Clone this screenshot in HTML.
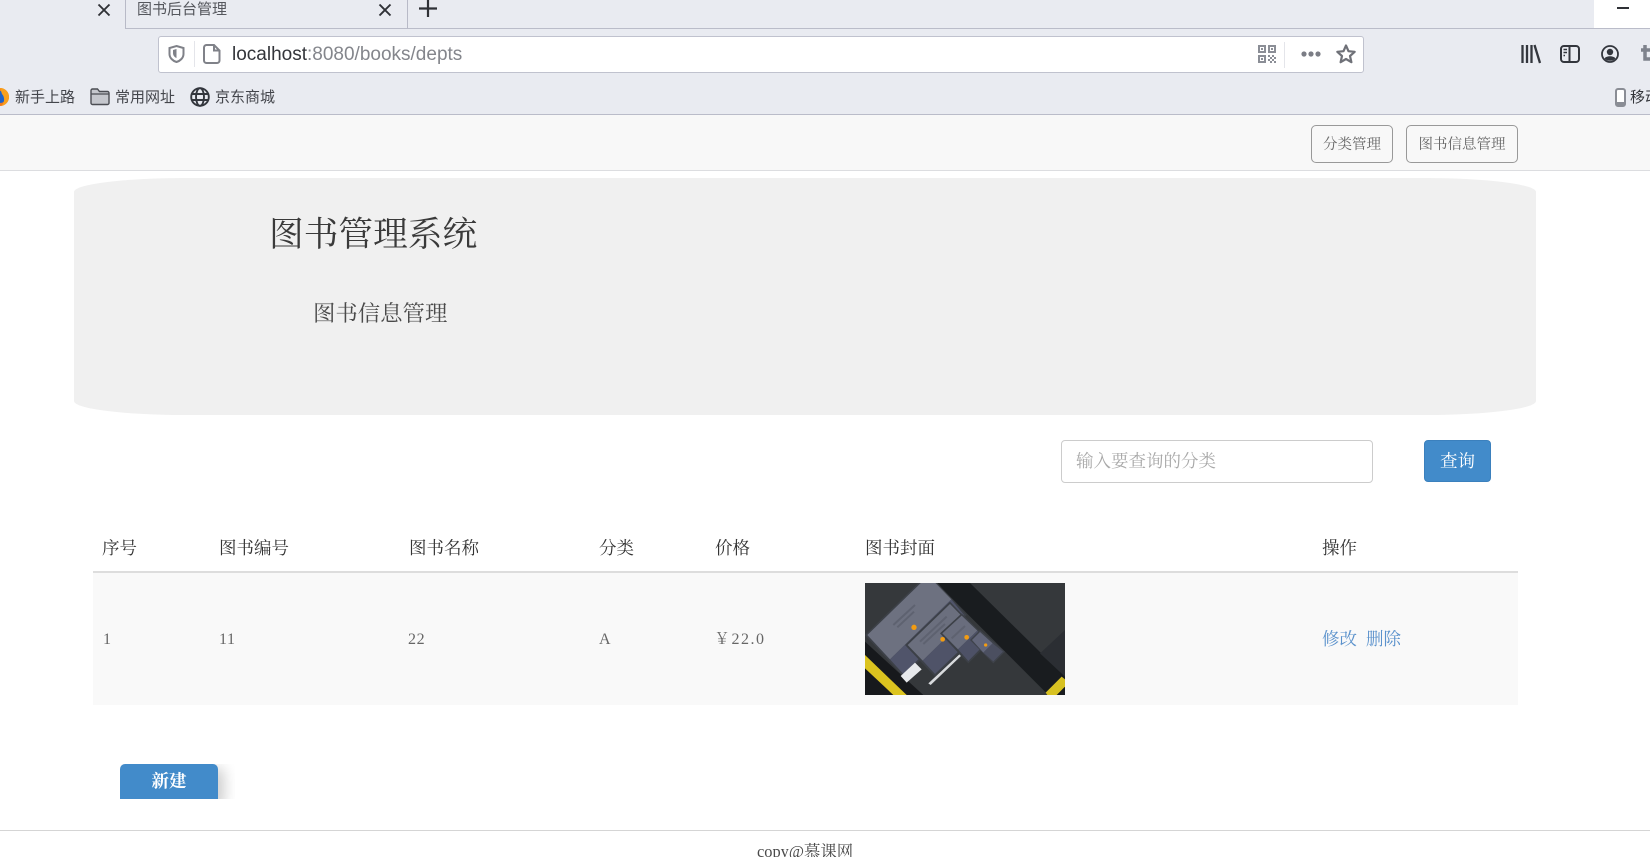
<!DOCTYPE html>
<html lang="zh"><head><meta charset="utf-8"><title>图书后台管理</title>
<style>
*{box-sizing:border-box}
html,body{margin:0;padding:0;width:1650px;height:857px;overflow:hidden;background:#fff}
body{position:relative;font-family:"Liberation Serif","Noto Serif CJK SC",serif;color:#333}
.a{position:absolute;white-space:nowrap}
.ui{font-family:"Liberation Sans","Noto Sans CJK SC",sans-serif}
.bm{font-size:15px;line-height:20px;top:88px;color:#44464c}
.th{font-size:17.500px;line-height:24px;top:536px;color:#333}
.td{font-size:16px;line-height:22px;top:629px;color:#666;letter-spacing:.6px}
svg{position:absolute;overflow:visible}
</style></head><body>
<!-- browser chrome -->
<div class="a" style="left:0;top:0;width:1650px;height:114px;background:#e9ebf1"></div>
<div class="a" style="left:0;top:28px;width:1650px;height:1px;background:#babcc9"></div>
<div class="a" style="left:0;top:0;width:125px;height:29px;background:#e9ebf1"></div>
<div class="a" style="left:125px;top:0;width:1px;height:29px;background:#b8bac7"></div>
<div class="a" style="left:407px;top:0;width:1px;height:29px;background:#b8bac7"></div>
<div class="a" style="left:1594px;top:0;width:56px;height:28px;background:#fff"></div>
<div class="a" style="left:1617px;top:7px;width:12px;height:2px;background:#2f3136"></div>
<svg style="left:97px;top:3px" width="14" height="14" viewBox="0 0 14 14"><path d="M1.500 1.500L12.500 12.500M12.500 1.500L1.500 12.500" stroke="#2f3136" stroke-width="1.900"/></svg>
<svg style="left:378px;top:3px" width="14" height="14" viewBox="0 0 14 14"><path d="M1.500 1.500L12.500 12.500M12.500 1.500L1.500 12.500" stroke="#2f3136" stroke-width="1.900"/></svg>
<svg style="left:419px;top:0" width="18" height="18" viewBox="0 0 18 18"><path d="M9 0V17M0 8.500H18" stroke="#2f3136" stroke-width="2.200"/></svg>
<div class="a ui" style="left:137px;top:0;font-size:15px;line-height:20px;color:#55575d">图书后台管理</div>
<!-- url bar -->
<div class="a" style="left:158px;top:36px;width:1206px;height:37px;background:#fff;border:1px solid #c0c2ce;border-radius:3px"></div>
<div class="a" style="left:194px;top:41px;width:1px;height:26px;background:#e4e5ea"></div>
<svg style="left:168px;top:45px" width="17" height="18" viewBox="0 0 17 18"><path d="M8.500 1L15.500 3V9C15.500 13 12 16 8.500 17C5 16 1.500 13 1.500 9V3Z" fill="none" stroke="#7f8188" stroke-width="2"/><path d="M8.500 4V13C6 12 5 10 5 8V5Z" fill="#7f8188"/></svg>
<svg style="left:203px;top:44px" width="18" height="20" viewBox="0 0 18 20"><path d="M3.500 1H11L16.500 6.500V16.500A2.500 2.500 0 0 1 14 19H3.500A2.500 2.500 0 0 1 1 16.500V3.500A2.500 2.500 0 0 1 3.500 1ZM11 1V6.500H16.500" fill="none" stroke="#808289" stroke-width="2"/></svg>
<div class="a ui" style="left:232px;top:43px;font-size:19px;line-height:24px;color:#33353a">localhost<span style="color:#84868c">:8080/books/depts</span></div>
<svg style="left:1258px;top:45px" width="18" height="18" viewBox="0 0 18 18"><g fill="#8b8e96"><path d="M0 0H8V8H0ZM2 2V6H6V2Z" fill-rule="evenodd"/><path d="M10 0H18V8H10ZM12 2V6H16V2Z" fill-rule="evenodd"/><path d="M0 10H8V18H0ZM2 12V16H6V12Z" fill-rule="evenodd"/><rect x="3" y="3" width="2" height="2"/><rect x="13" y="3" width="2" height="2"/><rect x="3" y="13" width="2" height="2"/><rect x="10" y="10" width="2" height="2"/><rect x="14" y="10" width="2" height="2"/><rect x="12" y="12" width="2" height="2"/><rect x="16" y="12" width="2" height="2"/><rect x="10" y="14" width="2" height="2"/><rect x="14" y="14" width="2" height="2"/><rect x="12" y="16" width="2" height="2"/><rect x="16" y="16" width="2" height="2"/></g></svg>
<div class="a" style="left:1284px;top:42px;width:1px;height:26px;background:#e4e5ea"></div>
<svg style="left:1301px;top:51px" width="20" height="6" viewBox="0 0 20 6"><g fill="#7b7d85"><circle cx="3" cy="3" r="2.600"/><circle cx="10" cy="3" r="2.600"/><circle cx="17" cy="3" r="2.600"/></g></svg>
<svg style="left:1336px;top:44px" width="20" height="20" viewBox="0 0 20 20"><path d="M10 1.500L12.500 7.200L18.700 7.800L14 12L15.400 18.200L10 15L4.600 18.200L6 12L1.300 7.800L7.500 7.200Z" fill="none" stroke="#6f7178" stroke-width="2.200" stroke-linejoin="round"/></svg>
<!-- toolbar icons -->
<svg style="left:1521px;top:45px" width="20" height="18" viewBox="0 0 20 18"><path d="M1.500 0V18M6 0V18M10.500 0V18M13.500 0L19 18" stroke="#33363d" stroke-width="2.300" fill="none"/></svg>
<svg style="left:1560px;top:45px" width="20" height="18" viewBox="0 0 20 18"><rect x="1" y="1" width="18" height="16" rx="3" fill="none" stroke="#33363d" stroke-width="2"/><path d="M9.500 1V17" stroke="#33363d" stroke-width="2"/><path d="M3.500 4.500H7M3.500 7.500H7M3.500 10.500H5" stroke="#33363d" stroke-width="1.500"/></svg>
<svg style="left:1601px;top:45px" width="18" height="18" viewBox="0 0 18 18"><circle cx="9" cy="9" r="8" fill="none" stroke="#33363d" stroke-width="1.800"/><circle cx="9" cy="7" r="3.200" fill="#33363d"/><path d="M3.500 13.500C5 10.500 13 10.500 14.500 13.500C12 16.500 6 16.500 3.500 13.500Z" fill="#33363d"/></svg>
<svg style="left:1641px;top:45px" width="12" height="18" viewBox="0 0 12 18"><path d="M4 0V14H12M0 5H12" fill="none" stroke="#7e828c" stroke-width="3.500"/></svg>
<!-- bookmarks -->
<svg style="left:-10px;top:87px" width="20" height="20" viewBox="0 0 20 20"><circle cx="10" cy="10" r="9" fill="#f27a1a"/><circle cx="10" cy="10" r="6" fill="#1f63c9"/><path d="M10 1A9 9 0 0 1 19 10C19 14 16 18 11 19C15 16 15 10 12 7Z" fill="#f9a01c"/></svg>
<div class="a ui bm" style="left:15px">新手上路</div>
<svg style="left:90px;top:88px" width="20" height="18" viewBox="0 0 20 18"><path d="M1 15V2.500A1.500 1.500 0 0 1 2.500 1H7.500L9.500 3.500H17.500A1.500 1.500 0 0 1 19 5V15A1.500 1.500 0 0 1 17.500 16.500H2.500A1.500 1.500 0 0 1 1 15Z" fill="#c5c7cd" stroke="#4b4d53" stroke-width="1.400"/><path d="M1 6H19" stroke="#4b4d53" stroke-width="1.200"/></svg>
<div class="a ui bm" style="left:115px">常用网址</div>
<svg style="left:190px;top:87px" width="20" height="20" viewBox="0 0 20 20"><g fill="none" stroke="#33363d" stroke-width="1.900"><circle cx="10" cy="10" r="8.800"/><ellipse cx="10" cy="10" rx="4" ry="8.800"/><path d="M1.500 7H18.500M1.500 13H18.500"/></g></svg>
<div class="a ui bm" style="left:215px">京东商城</div>
<svg style="left:1615px;top:88px" width="11" height="19" viewBox="0 0 11 19"><rect x="1" y="1" width="9" height="17" rx="2" fill="#fff" stroke="#8a8d95" stroke-width="2"/><rect x="1" y="14" width="9" height="4" fill="#8a8d95"/></svg>
<div class="a ui bm" style="left:1630px;color:#33353a">移动</div>
<div class="a" style="left:0;top:114px;width:1650px;height:1px;background:#babcc9"></div>
<!-- navbar -->
<div class="a" style="left:0;top:115px;width:1650px;height:56px;background:#f8f8f8;border-bottom:1px solid #dcdde0"></div>
<div class="a" style="left:1311px;top:125px;width:82px;height:38px;border:1px solid #999;border-radius:5px;font-size:14.500px;line-height:38px;text-align:center;color:#666">分类管理</div>
<div class="a" style="left:1406px;top:125px;width:112px;height:38px;border:1px solid #999;border-radius:5px;font-size:14.500px;line-height:38px;text-align:center;color:#666">图书信息管理</div>
<!-- jumbotron -->
<div class="a" style="left:74px;top:178px;width:1462px;height:237px;background:#f0f0f0;border-radius:110px/14px"></div>
<div class="a" style="left:269px;top:212px;font-size:34.700px;line-height:46px;color:#3a3a3a">图书管理系统</div>
<div class="a" style="left:313px;top:299px;font-size:22.400px;line-height:30px;color:#4a4a4a">图书信息管理</div>
<!-- search -->
<div class="a" style="left:1061px;top:440px;width:312px;height:43px;background:#fff;border:1px solid #ccc;border-radius:4px"></div>
<div class="a" style="left:1076px;top:449px;font-size:17.500px;line-height:24px;color:#a9a9a9">输入要查询的分类</div>
<div class="a" style="left:1424px;top:440px;width:67px;height:42px;background:#428bca;border:1px solid #3b80bd;border-radius:4px;color:#fff;font-size:17.500px;line-height:40px;text-align:center">查询</div>
<!-- table -->
<div class="a th" style="left:102px">序号</div>
<div class="a th" style="left:219px">图书编号</div>
<div class="a th" style="left:409px">图书名称</div>
<div class="a th" style="left:599px">分类</div>
<div class="a th" style="left:715px">价格</div>
<div class="a th" style="left:865px">图书封面</div>
<div class="a th" style="left:1322px">操作</div>
<div class="a" style="left:93px;top:571px;width:1425px;height:2px;background:#ddd"></div>
<div class="a" style="left:93px;top:573px;width:1425px;height:132px;background:#f9f9f9"></div>
<div class="a td" style="left:103px">1</div>
<div class="a td" style="left:219px">11</div>
<div class="a td" style="left:408px">22</div>
<div class="a td" style="left:599px">A</div>
<div class="a td" style="left:714px;letter-spacing:1.500px">￥22.0</div>
<svg style="left:865px;top:583px;overflow:hidden" width="200" height="112" viewBox="75 39 600 336">
<g style="filter:blur(.8px)">
<rect x="75" y="39" width="600" height="336" fill="#35383b"/>
<polygon points="290,39 390,39 675,320 675,375 625,375" fill="#191c1f"/>
<polygon points="675,180 600,250 675,320" fill="#2b2e33"/>
<polygon points="75,215 250,375 75,375" fill="#17191c"/>
<polygon points="75,255 200,375 160,375 75,295" fill="#dcc41f"/>
<polygon points="617,368 665,320 675,328 675,350 650,375 622,375" fill="#d8c222"/>
<polygon points="75,195 265,10 380,135 190,320" fill="#3c4047"/>
<polygon points="82,195 265,17 334,88 150,268" fill="#6d7180"/>
<polygon points="150,268 334,88 372,135 190,312" fill="#50546a"/>
<polygon points="182,318 225,278 245,298 200,338" fill="#e7e9ec"/>
<polygon points="265,340 358,253 363,258 272,345" fill="#d8dadd"/>
<polygon points="195,225 330,95 420,190 285,320" fill="#3c4047"/>
<polygon points="203,225 330,102 375,148 248,272" fill="#6b6f7e"/>
<polygon points="248,272 375,148 412,190 285,312" fill="#4f5368"/>
<polygon points="300,190 365,130 450,215 385,280" fill="#3c4047"/>
<polygon points="307,190 365,137 412,182 354,238" fill="#696d7d"/>
<polygon points="354,238 412,182 442,215 385,273" fill="#4d5166"/>
<polygon points="390,210 420,180 495,245 460,280" fill="#3e424a"/>
<polygon points="396,210 420,186 458,220 430,248" fill="#62667a"/>
<polygon points="430,248 458,220 489,245 460,274" fill="#4b4f60"/>
<path d="M160 165L225 105M172 172L222 125M240 215L320 140M250 222L315 162M335 205L375 168" stroke="#5e6270" stroke-width="6" fill="none"/>
<g fill="#f39c12"><circle cx="222" cy="172" r="8"/><circle cx="308" cy="208" r="7"/><circle cx="380" cy="202" r="7"/><circle cx="437" cy="225" r="5"/></g>
</g>
</svg>
<div class="a" style="left:1322px;top:628px;font-size:17.500px;line-height:22px;color:#5b92cc">修改</div>
<div class="a" style="left:1366px;top:628px;font-size:17.500px;line-height:22px;color:#5b92cc">删除</div>
<!-- new button -->
<div class="a" style="left:120px;top:764px;width:115px;height:35px;overflow:hidden"><div style="position:absolute;left:0;top:0;width:98px;height:40px;background:#428bca;border-radius:5px;box-shadow:6px 4px 14px rgba(0,0,0,.2);color:#fff;font-size:17.500px;font-weight:700;line-height:35px;text-align:center">新建</div></div>
<!-- footer -->
<div class="a" style="left:0;top:830px;width:1650px;height:1px;background:#d5d5d5"></div>
<div class="a" style="left:757px;top:841px;font-size:16.400px;line-height:22px;color:#4a4a4a;height:16px;overflow:hidden">copy@慕课网</div>
</body></html>
